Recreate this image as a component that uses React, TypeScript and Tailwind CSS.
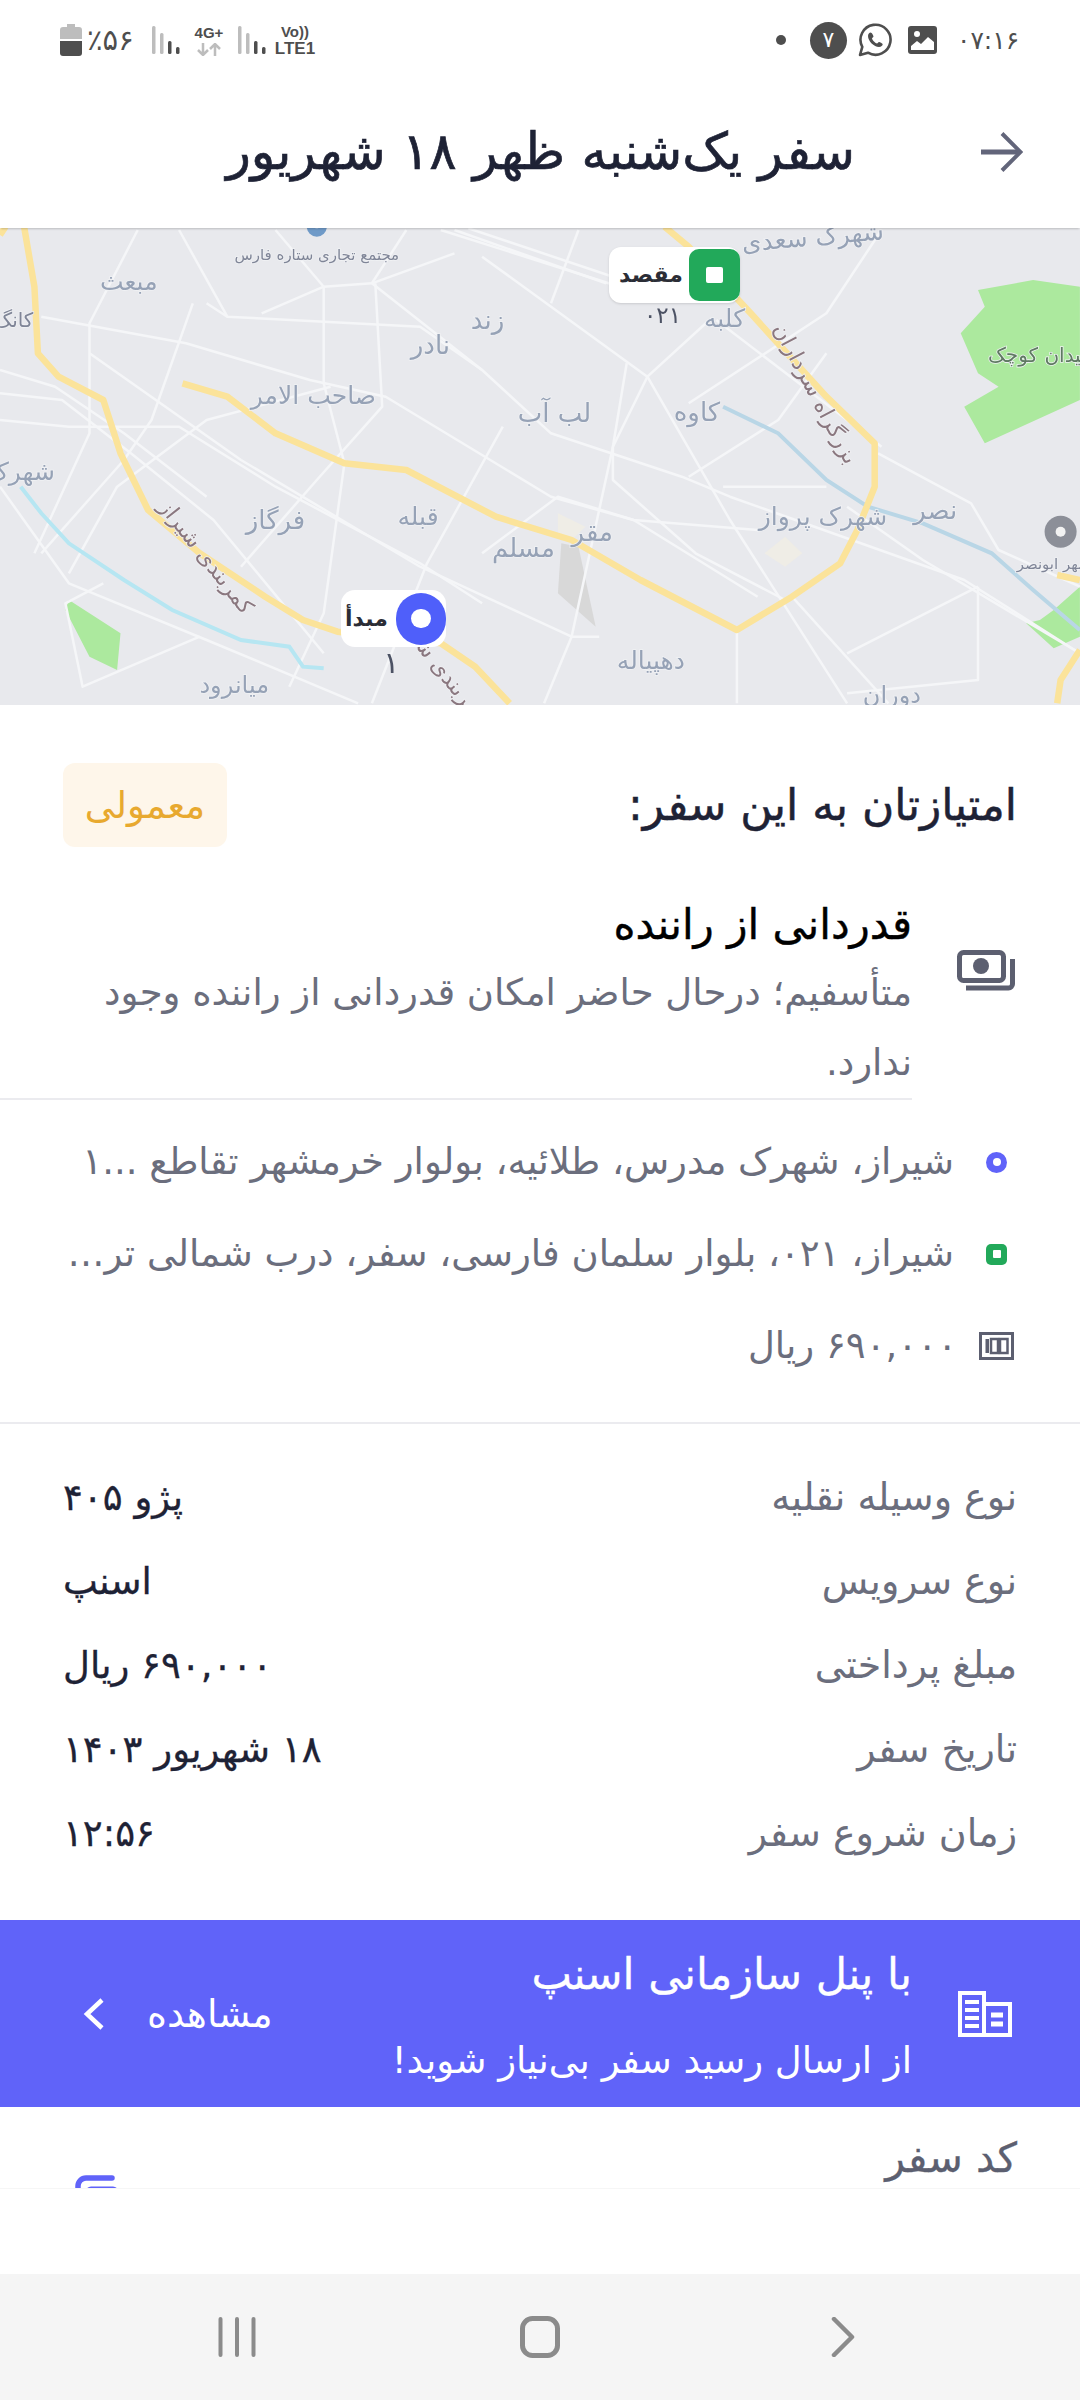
import React from "react";

const F = "[font-family:'DejaVu_Sans',sans-serif]";
const px = (x: number) => +(x / 1.452).toFixed(1);
const py = (y: number) => +(y / 3 - 8 + 0).toFixed(1);
const pts = (a: number[]) => {
  const o: string[] = [];
  for (let i = 0; i < a.length; i += 2) o.push(px(a[i]) + "," + py(a[i + 1]));
  return o.join(" ");
};

const whiteRoads: number[][] = [
  [60,290,270,370,450,480,560,530,800,830,920,900,1100,930],
  [130,400,350,720,610,1040,830,1250,870,1250],
  [0,600,100,620,260,620,400,800,610,1030,700,1150],
  [0,520,90,540,190,700,310,900,470,1300],
  [0,450,80,500,180,640,300,830],
  [540,190,700,450,800,640,990,770,1060,830,1400,1080,1568,1300],
  [640,30,900,200],[660,30,880,190],[680,25,890,170],
  [700,110,940,470,1060,900,1230,1450],
  [1030,300,940,470,890,680,890,780,1010,1000,1140,1140],
  [300,250,330,290,610,320,700,450],
  [470,200,380,280],[470,200,540,190,660,100],
  [200,30,130,310,130,640,50,1000],
  [470,200,470,490,500,730,470,1180,420,1400],
  [545,190,555,560,460,780,350,1040],
  [730,620,620,1030,540,1450],
  [910,430,890,680,830,1250,790,1450],
  [1070,1230,1070,1450],
  [1275,700,1410,850,1450,990,1568,1100],
  [1040,300,1230,600,1280,680],
  [1050,800,1200,800],
  [1280,30,1200,280,1000,550],
  [1000,770,1130,600,1200,400],
  [0,800,100,1090,300,1260,520,1450],
  [150,1090,95,1150,120,1400,290,1250],
  [1230,860,1340,1020,1568,1300],
  [1420,1100,1420,1380,1230,1420],
  [1420,1100,1230,1300],
  [280,250,220,600,180,720,60,1000],
  [400,30,470,200],[260,30,330,290],[840,30,800,250],[590,30,540,190],
  [100,1060,170,800,300,600,480,500],
  [700,1000,810,830,920,900,1100,1130],
  [1150,1130,1290,1450],
];

const labels: [string, number, number, number, number, string][] = [
  ["شهرک سعدی", 1180, 50, 25, -5, "#96a2b6"],
  ["مجتمع تجاری ستاره فارس", 460, 105, 15, 0, "#7f8597"],
  ["مبعث", 187, 185, 25, 0, "#96a2b6"],
  ["کانگ", 20, 300, 20, 0, "#7f8597"],
  ["زند", 708, 300, 26, 0, "#96a2b6"],
  ["نادر", 625, 375, 26, 0, "#96a2b6"],
  ["صاحب الامر", 455, 525, 25, 0, "#96a2b6"],
  ["لب آب", 805, 580, 26, 0, "#96a2b6"],
  ["کاوه", 1012, 575, 26, 0, "#96a2b6"],
  ["کلبه", 1052, 295, 25, 0, "#96a2b6"],
  ["بزرگراه سرداران", 1185, 520, 22, 62, "#8a777f"],
  ["میدان کوچک", 1510, 405, 20, 0, "#5f7a62"],
  ["نصر", 1358, 870, 26, 0, "#96a2b6"],
  ["شهرک پرواز", 1195, 890, 25, 0, "#96a2b6"],
  ["مقر", 860, 935, 26, 0, "#96a2b6"],
  ["مسلم", 760, 985, 26, 0, "#96a2b6"],
  ["قبله", 607, 890, 25, 0, "#96a2b6"],
  ["فرگاز", 400, 900, 26, 0, "#96a2b6"],
  ["شهرک", 30, 755, 25, 0, "#96a2b6"],
  ["کمربندی شیراز", 300, 1010, 22, 52, "#8a777f"],
  ["کمربندی شیراز", 640, 1340, 22, 52, "#8a777f"],
  ["دهپیاله", 945, 1320, 25, 0, "#96a2b6"],
  ["میانرود", 340, 1395, 24, 0, "#96a2b6"],
  ["دوران", 1295, 1425, 24, 0, "#96a2b6"],
  ["شهر ابونصر", 1530, 1030, 15, 0, "#7f8597"],
];

function MapSvg() {
  return (
    <svg viewBox="0 0 1080 477" className="w-full h-full block blur-[0.5px]">
      <rect width="1080" height="477" fill="#e8e9ed" />
      <polygon fill="#ace99e" points={pts([1500,180,1568,200,1568,540,1430,670,1400,560,1450,500,1420,460,1395,340,1430,260,1420,210])} />
      <polygon fill="#ace99e" points={pts([100,1140,130,1180,175,1240,170,1350,130,1310,95,1170])} />
      <polygon fill="#ace99e" points={pts([1568,1100,1530,1170,1510,1200,1490,1210,1530,1285,1568,1250])} />
      <polygon fill="#d8d8d8" points={pts([815,970,840,980,865,1220,810,1120])} />
      <polygon fill="#efede6" points={pts([810,880,850,920,830,960,810,940])} />
      <polygon fill="#efede6" points={pts([1140,950,1165,1000,1140,1040,1110,1000])} />
      <g fill="none" stroke="#f5f6f8" strokeWidth="2.5" strokeLinejoin="round">
        {whiteRoads.map((r, i) => (
          <polyline key={i} points={pts(r)} />
        ))}
      </g>
      <polyline fill="none" stroke="#b6e6f2" strokeWidth="4" points={pts([30,800,60,880,100,970,180,1080,250,1170,350,1260,420,1280,440,1340,470,1345])} />
      <polyline fill="none" stroke="#b9d6e6" strokeWidth="4" points={pts([1050,560,1130,640,1200,780,1260,860,1340,910,1440,1000,1500,1110,1568,1230])} />
      <g fill="none" stroke="#fbe39a" strokeWidth="6.5" strokeLinejoin="round">
        <polyline points={pts([35,20,50,200,55,400,85,470,150,540,175,700,215,870,290,1000,385,1130,440,1200,490,1235,640,1270,690,1340,740,1450])} />
        <polyline points={pts([265,490,330,530,400,640,500,730,590,750,720,890,830,960,930,1080,1070,1230,1150,1130,1220,1030,1245,930,1270,800,1270,670,1200,530,1090,280,1000,80,965,20])} />
        <polyline points={pts([1568,1290,1540,1380,1535,1450])} />
        <polyline points={pts([1535,1065,1568,1080])} />
        <polyline points={pts([0,45,8,20])} />
      </g>
      <circle cx={px(460)} cy={py(20)} r="10" fill="#6f9ac8" />
      <circle cx={px(460)} cy={py(10)} r="5" fill="#e8e9ed" />
      <circle cx={px(1540)} cy={py(935)} r="16" fill="#8c8f98" />
      <circle cx={px(1540)} cy={py(935)} r="5" fill="#f2f2f2" />
      <g textAnchor="middle" className={F}>
        {labels.map(([t, x, y, s, r, c], i) => (
          <text
            key={i}
            x={px(x)}
            y={py(y) + s * 0.35}
            fontSize={s}
            fill={c}
            stroke="#f0f1f4"
            strokeWidth="1.500"
            paintOrder="stroke"
            transform={r ? `rotate(${r} ${px(x)} ${py(y)})` : undefined}
          >
            {t}
          </text>
        ))}
      </g>
      <text x={px(962)} y={py(285) + 8} fontSize="23" textAnchor="middle" fill="#4c5264" className={F}>۰۲۱</text>
      <text x={px(568)} y={py(1325) + 11} fontSize="30" textAnchor="middle" fill="#4c5264" className={F}>۱</text>
    </svg>
  );
}

function Bars() {
  return (
    <svg width="28" height="28" viewBox="0 0 28 28" className="block">
      <rect x="0" y="0" width="3.500" height="28" rx="1.500" fill="#bdbdbd" />
      <rect x="8" y="7" width="3.500" height="21" rx="1.500" fill="#bdbdbd" />
      <rect x="16" y="15" width="3.500" height="13" rx="1.500" fill="#4e4e4e" />
      <rect x="24" y="21" width="3.500" height="7" rx="1.500" fill="#4e4e4e" />
    </svg>
  );
}

function StatusBar() {
  return (
    <div dir="ltr" className="h-[76px] flex items-center justify-between pl-[60px] pr-[61px] pt-[4px] [font-family:'Liberation_Sans',sans-serif]">
      <div className="flex items-center">
        <svg width="22" height="32" viewBox="0 0 22 32" className="block">
          <path d="M7 0h8v3h4a3 3 0 0 1 3 3v9H0V6a3 3 0 0 1 3-3h4z" fill="#bdbdbd" />
          <path d="M0 17h22v12a3 3 0 0 1-3 3H3a3 3 0 0 1-3-3z" fill="#4e4e4e" />
        </svg>
        <span className={`ml-[5px] w-[50px] text-[29px] leading-none text-[#4e4e4e] whitespace-nowrap ${F}`}>٪۵۶</span>
        <div className="ml-[15px]"><Bars /></div>
        <div className="ml-[13px] w-[32px] flex flex-col items-center">
          <span className="text-[15px] leading-[16px] font-bold text-[#4e4e4e] whitespace-nowrap">4G+</span>
          <svg width="26" height="13" viewBox="0 0 26 13" className="block mt-[2px]">
            <path d="M7 0v12M2 7l5 5 5-5" fill="none" stroke="#bdbdbd" strokeWidth="2.500" />
            <path d="M19 13V1M14 6l5-5 5 5" fill="none" stroke="#bdbdbd" strokeWidth="2.500" />
          </svg>
        </div>
        <div className="ml-[13px]"><Bars /></div>
        <div className="ml-[9px] w-[40px] flex flex-col items-center font-bold text-[#4e4e4e]">
          <span className="text-[15px] leading-[17px] whitespace-nowrap">Vo))</span>
          <span className="text-[17px] leading-[17px] whitespace-nowrap">LTE1</span>
        </div>
      </div>
      <div className="flex items-center">
        <div className="w-[10px] h-[10px] rounded-full bg-[#4e4e4e]" />
        <div className={`ml-[24px] w-[37px] h-[37px] rounded-full bg-[#4e4e4e] text-white flex items-center justify-center text-[22px] leading-none ${F}`}>۷</div>
        <svg width="34" height="34" viewBox="0 0 34 34" className="block ml-[11px]">
          <path d="M2 32l2.300-8.200A15 15 0 1 1 10 29.700z" fill="none" stroke="#4e4e4e" strokeWidth="2.600" strokeLinejoin="round" />
          <path d="M12.500 9.500c-1 0-2.500 1.500-2.500 3.500 0 5 6 11 11 11 2.200 0 3.700-1.600 3.700-2.700 0-.8-3-2.300-3.700-2.300-.8 0-1.300 1.500-2 1.500-1.300 0-5-3.600-5-5 0-.8 1.500-1.200 1.500-2 0-.7-1.500-4-3-4z" fill="#4e4e4e" />
        </svg>
        <svg width="29" height="28" viewBox="0 0 29 28" className="block ml-[16px]">
          <rect width="29" height="28" rx="3" fill="#4e4e4e" />
          <circle cx="9" cy="8" r="3" fill="#fff" />
          <path d="M3 24v-4l6-5 4 3 7-7 6 5v8z" fill="#fff" />
        </svg>
        <span className={`ml-[20px] w-[62px] text-[25px] leading-none text-[#4e4e4e] whitespace-nowrap ${F}`}>۰۷:۱۶</span>
      </div>
    </div>
  );
}

function Row({ k, v }: { k: string; v: string }) {
  return (
    <div className="h-[84px] flex items-center justify-between">
      <span className="text-[#6b6e7d] text-[38px] leading-none">{k}</span>
      <span className="text-[#1e2235] text-[37px] leading-none [-webkit-text-stroke:0.3px]">{v}</span>
    </div>
  );
}

export default function App() {
  return (
    <div dir="rtl" className={`w-[1080px] h-[2400px] bg-white flex flex-col overflow-hidden ${F}`}>
      <div className="flex-1 min-h-0 overflow-hidden">
        <StatusBar />
        <header className="relative z-10 h-[152px] flex items-center pr-[57px] shadow-[0_2px_2px_-1px_rgba(0,0,0,0.2)]">
          <svg width="42" height="40" viewBox="0 0 42 40" className="block shrink-0">
            <path d="M0 20h39" stroke="#62657a" strokeWidth="5" fill="none" />
            <path d="M21 1.500 39.500 20 21 38.500" stroke="#62657a" strokeWidth="4" fill="none" />
          </svg>
          <h1 className="mr-[126px] text-[51px] leading-[64px] text-[#1e2235] whitespace-nowrap [-webkit-text-stroke:0.7px]">سفر یک‌شنبه ظهر ۱۸ شهریور</h1>
        </header>

        <div className="relative h-[477px]">
          <MapSvg />
          <div className="absolute left-[609px] top-[19px] w-[131px] h-[56px] rounded-[12px] bg-white flex flex-row-reverse items-center justify-between shadow-sm" dir="ltr">
            <div className="w-[51px] h-[52px] rounded-[10px] bg-[#22a95a] flex items-center justify-center">
              <div className="w-[17px] h-[16px] rounded-[2px] bg-white" />
            </div>
            <span className="ml-[10px] text-[22px] font-bold leading-none text-[#2b2d36]">مقصد</span>
          </div>
          <div className="absolute left-[341px] top-[362px] w-[105px] h-[57px] rounded-[14px] bg-white flex flex-row-reverse items-center justify-between" dir="ltr">
            <div className="w-[50px] h-[52px] rounded-full bg-[#4f5ffa] flex items-center justify-center">
              <div className="w-[20px] h-[19px] rounded-full bg-white" />
            </div>
            <span className="ml-[4px] text-[22px] font-bold leading-none text-[#2b2d36]">مبدأ</span>
          </div>
        </div>

        <section className="pl-[63px] pr-[63px] pt-[58px] flex items-center justify-between">
          <span className="text-[44px] leading-[56px] text-[#1e2235] [-webkit-text-stroke:0.5px]">امتیازتان به این سفر:</span>
          <span className="w-[164px] h-[84px] rounded-[12px] bg-[#fef6ea] flex items-center justify-center text-[37px] leading-none text-[#e8a92f]">معمولی</span>
        </section>

        <section className="mt-[45px] flex items-start pr-[65px]">
          <svg width="58" height="42" viewBox="0 0 58 42" className="block shrink-0 mt-[58px]">
            <rect x="2.500" y="2.500" width="44" height="28" rx="4" fill="none" stroke="#5c5f70" strokeWidth="5" />
            <circle cx="24" cy="16" r="8" fill="#5c5f70" />
            <path d="M55.500 9v25a4 4 0 0 1-4 4H9" fill="none" stroke="#5c5f70" strokeWidth="5" />
          </svg>
          <div className="flex-1 min-w-0 mr-[45px] border-b-2 border-[#ebebef]">
            <div className="text-[42px] leading-[66px] text-black [-webkit-text-stroke:0.4px]">قدردانی از راننده</div>
            <p className="pl-[63px] text-[37px] leading-[70px] text-[#6b6e7d]">متأسفیم؛ درحال حاضر امکان قدردانی از راننده وجود ندارد.</p>
          </div>
        </section>

        <section className="pl-[63px] pr-[73px] border-b-2 border-[#ebebef] h-[324px] pt-[16px]">
          <div className="h-[92px] flex items-center">
            <div className="shrink-0 w-[21px] h-[21px] rounded-full bg-[#6063f9] flex items-center justify-center"><div className="w-[8px] h-[8px] rounded-full bg-white" /></div>
            <span className="mr-[32px] flex-1 min-w-0 truncate text-[37px] leading-[50px] text-[#6b6e7d]">شیراز، شهرک مدرس، طلائیه، بولوار خرمشهر تقاطع ...۱</span>
          </div>
          <div className="h-[92px] flex items-center">
            <div className="shrink-0 w-[21px] h-[21px] rounded-[5px] bg-[#22a95a] flex items-center justify-center"><div className="w-[8px] h-[8px] rounded-[1px] bg-white" /></div>
            <span className="mr-[32px] flex-1 min-w-0 truncate text-[37px] leading-[50px] text-[#6b6e7d]">شیراز، ۰۲۱، بلوار سلمان فارسی، سفر، درب شمالی ترمینال مسافربری</span>
          </div>
          <div className="h-[92px] flex items-center -mr-[7px]">
            <svg width="35" height="28" viewBox="0 0 35 28" className="block shrink-0">
              <rect x="1.500" y="1.500" width="32" height="25" fill="none" stroke="#5c5f70" strokeWidth="3" />
              <rect x="6.500" y="7" width="3.500" height="14" fill="#5c5f70" />
              <rect x="12" y="7" width="7" height="14" fill="none" stroke="#5c5f70" strokeWidth="2.500" />
              <rect x="21" y="7" width="7.500" height="14" fill="none" stroke="#5c5f70" strokeWidth="2.500" />
            </svg>
            <span className="mr-[22px] text-[37px] leading-[50px] text-[#6b6e7d]">۶۹۰,۰۰۰ ریال</span>
          </div>
        </section>

        <section className="px-[63px] pt-[31px]">
          <Row k="نوع وسیله نقلیه" v="پژو ۴۰۵" />
          <Row k="نوع سرویس" v="اسنپ" />
          <Row k="مبلغ پرداختی" v="۶۹۰,۰۰۰ ریال" />
          <Row k="تاریخ سفر" v="۱۸ شهریور ۱۴۰۳" />
          <Row k="زمان شروع سفر" v="۱۲:۵۶" />
        </section>

        <section className="mt-[45px] h-[187px] bg-[#6063f9] flex items-center pr-[68px] pl-[83px] text-white">
          <svg width="54" height="46" viewBox="0 0 54 46" className="block shrink-0">
            <path d="M2 2h24v42H2zM26 13h26v31H26z" fill="none" stroke="#fff" strokeWidth="4" />
            <path d="M7 11h14M7 19h14M7 27h14M7 35h14" stroke="#fff" strokeWidth="4" />
            <path d="M33 24h12M33 33h12" stroke="#fff" strokeWidth="5" />
          </svg>
          <div className="mr-[46px] flex-1 min-w-0">
            <div className="text-[43px] leading-[90px] whitespace-nowrap [-webkit-text-stroke:0.3px]">با پنل سازمانی اسنپ</div>
            <div className="text-[37px] leading-[76px] mt-[4px] whitespace-nowrap">از ارسال رسید سفر بی‌نیاز شوید!</div>
          </div>
          <span className="text-[38px] leading-none whitespace-nowrap">مشاهده</span>
          <svg width="22" height="32" viewBox="0 0 22 32" className="block mr-[42px] shrink-0">
            <path d="M19 2 4 16l15 14" fill="none" stroke="#fff" strokeWidth="4.500" />
          </svg>
        </section>

        <section className="px-[63px] pt-[26px] h-[90px] flex justify-between items-start">
          <span className="text-[41px] leading-[50px] text-[#5c5f70] [-webkit-text-stroke:0.3px]">کد سفر</span>
          <svg width="46" height="60" viewBox="0 0 46 60" className="block mt-[42px] ml-[12px]">
            <path d="M3 30V11a8 8 0 0 1 8-8h26" fill="none" stroke="#6063f9" strokeWidth="5.500" strokeLinecap="round" />
            <rect x="12" y="13" width="30" height="40" rx="4" fill="none" stroke="#6063f9" strokeWidth="3" />
          </svg>
        </section>
      </div>

      <div className="h-[86px] shrink-0 bg-white border-t border-[#f6f6f6]" />

      <nav dir="ltr" className="h-[126px] shrink-0 bg-[#f5f5f5] grid grid-cols-3 px-[85px] items-center">
        <div className="flex justify-center">
          <svg width="38" height="40" viewBox="0 0 38 40" className="block">
            <path d="M2.500 2v36M19 2v36M35.500 2v36" stroke="#8b8b8b" strokeWidth="4" strokeLinecap="round" />
          </svg>
        </div>
        <div className="flex justify-center">
          <svg width="40" height="42" viewBox="0 0 40 42" className="block">
            <rect x="2.500" y="2.500" width="35" height="37" rx="10" fill="none" stroke="#8b8b8b" strokeWidth="5" />
          </svg>
        </div>
        <div className="flex justify-center">
          <svg width="24" height="40" viewBox="0 0 24 40" className="block">
            <path d="M3 2l18 18L3 38" fill="none" stroke="#8b8b8b" strokeWidth="4.500" strokeLinecap="round" strokeLinejoin="round" />
          </svg>
        </div>
      </nav>
    </div>
  );
}
